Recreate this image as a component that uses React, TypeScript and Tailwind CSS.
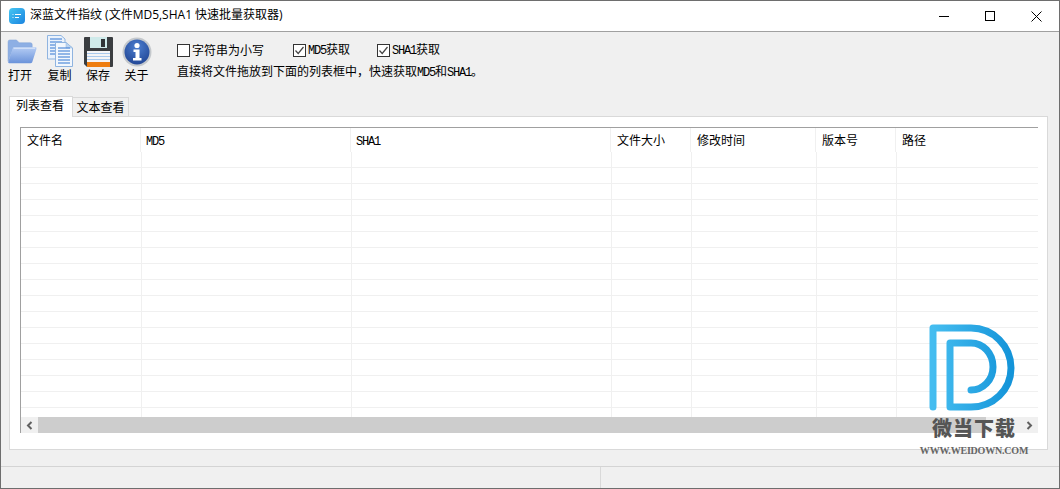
const latin = "font-['Liberation_Mono','Noto_Sans_CJK_SC',monospace]";
const latinText = `${latin} text-[12px] tracking-[-1.2px]`;

const columns = [
    { title: "文件名", width: "w-[120px]" },
    { title: "MD5", width: "w-[210px]" },
    { title: "SHA1", width: "w-[260px]" },
    { title: "文件大小", width: "w-[80px]" },
    { title: "修改时间", width: "w-[125px]" },
    { title: "版本号", width: "w-[80px]" },
    { title: "路径", width: "flex-1" },
];

function FolderIcon() {
    return (
        <svg width="30" height="26" viewBox="0 0 32 28" className="mb-[2px] ml-[3px]">
            <defs>
                <linearGradient id="folderFront" x1="0" y1="0" x2="0" y2="1">
                    <stop offset="0" stopColor="#b4ccf4" />
                    <stop offset="1" stopColor="#6b93da" />
                </linearGradient>
            </defs>
            <path d="M1 3 Q1 1 3 1 H10 L13 4 H25 Q27 4 27 6 V9 H7 L1 24 Z" fill="#8dafe4" stroke="#7d9fd6" strokeWidth="0.5" />
            <path d="M7 9 H31 Q32 9 31.5 11 L27 25 Q26.5 26 25 26 H2 Q0.8 26 1.2 24.5 L6 10 Q6.3 9 7 9 Z" fill="url(#folderFront)" />
            <path d="M7 10 H30" stroke="#dde8fa" strokeWidth="1" />
        </svg>
    );
}

function CopyIcon() {
    const back = [4, 7, 10, 13, 16, 19];
    const front = [13, 16, 19, 22, 25, 28];
    return (
        <svg width="26" height="32" viewBox="0 0 26 32">
            <path d="M0.5 0.5 H14 L18 4 V24 H0.5 Z" fill="#eaf2fc" stroke="#8fb4e0" />
            {back.map((y) => (
                <path key={y} d="M3 0 H15" transform={`translate(0 ${y})`} stroke="#4f8ad8" strokeWidth="1.2" />
            ))}
            <path d="M8.5 7.5 H19 L25.5 13 V31.5 H8.5 Z" fill="#f2f7fd" stroke="#8fb4e0" />
            <path d="M19 7.5 V13 H25.5 Z" fill="#bcd4f0" stroke="#8fb4e0" strokeWidth="0.5" />
            {front.map((y) => (
                <path key={y} d="M11 0 H23" transform={`translate(0 ${y})`} stroke="#4f8ad8" strokeWidth="1.2" />
            ))}
        </svg>
    );
}

function SaveIcon() {
    return (
        <svg width="29" height="30" viewBox="0 0 29 30">
            <path d="M1 0 H28 Q29 0 29 1 V29 Q29 30 28 30 H3 L0 27 V1 Q0 0 1 0 Z" fill="#3a3d40" />
            <rect x="6" y="0" width="17" height="11" fill="#cfeaea" />
            <rect x="17" y="2" width="4" height="8" fill="#2f3336" />
            <rect x="3" y="14" width="23" height="16" fill="#f4f4f6" />
            <rect x="3" y="16" width="23" height="1" fill="#a9c9ec" />
            <rect x="3" y="19" width="23" height="1" fill="#a9c9ec" />
            <rect x="3" y="22" width="23" height="1" fill="#a9c9ec" />
            <rect x="3" y="25" width="23" height="5" fill="#ee7d10" />
        </svg>
    );
}

function InfoIcon() {
    return (
        <svg width="30" height="30" viewBox="0 0 30 30">
            <defs>
                <radialGradient id="infoFill" cx="0.5" cy="0.3" r="0.8">
                    <stop offset="0" stopColor="#4d7fd0" />
                    <stop offset="1" stopColor="#1c3f8e" />
                </radialGradient>
            </defs>
            <circle cx="15" cy="15" r="14.5" fill="#c4c8cc" />
            <circle cx="15" cy="15" r="12.5" fill="url(#infoFill)" />
            <circle cx="15" cy="8.5" r="2.6" fill="#fff" />
            <path d="M11.5 12.5 H17.5 V21 H19.5 V23.5 H11 V21 H13.5 V15 H11.5 Z" fill="#fff" />
        </svg>
    );
}

function AppIcon() {
    return (
        <svg width="16" height="16" viewBox="0 0 16 16">
            <defs>
                <linearGradient id="appFill" x1="0" y1="0" x2="1" y2="1">
                    <stop offset="0" stopColor="#45c6f2" />
                    <stop offset="1" stopColor="#1b84e0" />
                </linearGradient>
            </defs>
            <rect width="16" height="16" rx="4" fill="url(#appFill)" />
            <path d="M6 6.5 H12 M6 9.5 H10" stroke="#fff" strokeWidth="1.2" />
            <path d="M3.5 6.5 H4.5 M3.5 9.5 H4.5" stroke="#d7f1fc" strokeWidth="1.2" />
        </svg>
    );
}

function Check({ checked }: { checked: boolean }) {
    return (
        <svg width="13" height="13" viewBox="0 0 13 13" className="shrink-0">
            <rect x="0.5" y="0.5" width="12" height="12" fill="#fff" stroke="#333" />
            {checked && <path d="M2.5 6.5 L5.2 9.5 L10.5 3" fill="none" stroke="#444" strokeWidth="1.2" />}
        </svg>
    );
}

function Tool({ icon, label, width }: { icon: React.ReactNode; label: string; width: string }) {
    return (
        <div className={`${width} flex flex-col items-center`}>
            <div className="h-[31px] flex items-end justify-center">{icon}</div>
            <span className="mt-[1px] text-[12px] leading-[14px] text-black">{label}</span>
        </div>
    );
}

function Logo() {
    return (
        <div className="absolute left-[921px] top-[322px] w-[104px] flex flex-col items-center pointer-events-none">
            <svg width="90" height="92" viewBox="2 0 90 92">
                <defs>
                    <linearGradient id="logoStroke" x1="0" y1="0" x2="1" y2="0">
                        <stop offset="0" stopColor="#45bdf0" />
                        <stop offset="1" stopColor="#1494d9" />
                    </linearGradient>
                </defs>
                <path
                    d="M6 85 V6 H44 C66 6 84 24 84 46 C84 68 66 85 44 85 H23 V21 H44 C56 21 66 31 66 45 C66 58 56 68 44 68"
                    fill="none"
                    stroke="url(#logoStroke)"
                    strokeWidth="7"
                    strokeLinecap="round"
                    strokeLinejoin="round"
                />
            </svg>
            <span className="text-[20px] leading-[24px] mt-[2px] tracking-[1px] font-black text-[#555] font-['Noto_Sans_CJK_SC',sans-serif]">微当下载</span>
            <span className="text-[10px] leading-[12px] mt-[5px] font-bold tracking-[-0.2px] text-[#666] whitespace-nowrap font-['Liberation_Serif',serif]">WWW.WEIDOWN.COM</span>
        </div>
    );
}

export default function App() {
    return (
        <div className="relative w-[1060px] h-[489px] overflow-hidden flex flex-col bg-[#f0f0f0] border-x border-b border-[#6e6e6e] font-['Noto_Sans_CJK_SC',sans-serif]">
            {/* Title bar */}
            <div className="h-[32px] shrink-0 bg-white border-t border-b border-t-[#6e6e6e] border-b-[#a0a0a0] flex items-center">
                <div className="ml-[8px] mr-[5px]">
                    <AppIcon />
                </div>
                <span className="text-[12px] leading-[14px] -mt-[2px] text-black font-['Open_Sans','Noto_Sans_CJK_SC',sans-serif]">深蓝文件指纹 (文件MD5,SHA1 快速批量获取器)</span>
                <div className="ml-auto flex items-center">
                    <div className="w-[46px] flex justify-center">
                        <div className="w-[10px] h-px bg-black" />
                    </div>
                    <div className="w-[46px] flex justify-center">
                        <div className="w-[10px] h-[10px] border border-black" />
                    </div>
                    <div className="w-[46px] flex justify-center">
                        <svg width="11" height="11" viewBox="0 0 11 11">
                            <path d="M0.5 0.5 L10.5 10.5 M10.5 0.5 L0.5 10.5" stroke="#000" strokeWidth="1" />
                        </svg>
                    </div>
                </div>
            </div>

            {/* Toolbar */}
            <div className="h-[63px] shrink-0 flex">
                <div className="-ml-[1px] mt-[4px] flex">
                    <Tool icon={<FolderIcon />} label="打开" width="w-[40px]" />
                    <Tool icon={<CopyIcon />} label="复制" width="w-[39px]" />
                    <Tool icon={<SaveIcon />} label="保存" width="w-[38px]" />
                    <Tool icon={<InfoIcon />} label="关于" width="w-[39px]" />
                </div>
                <div className="ml-[21px] mt-[10px] flex flex-col text-[12px] leading-[14px] text-black">
                    <div className="flex items-center">
                        <div className="w-[116px] flex items-center gap-[2px]">
                            <Check checked={false} />
                            <span>字符串为小写</span>
                        </div>
                        <div className="w-[84px] flex items-center gap-[2px]">
                            <Check checked />
                            <span><span className={latinText}>MD5</span>获取</span>
                        </div>
                        <div className="flex items-center gap-[2px]">
                            <Check checked />
                            <span><span className={latinText}>SHA1</span>获取</span>
                        </div>
                    </div>
                    <div className="mt-[6px]">
                        直接将文件拖放到下面的列表框中，快速获取<span className={latinText}>MD5</span>和<span className={latinText}>SHA1</span>。
                    </div>
                </div>
            </div>

            {/* Tabs */}
            <div className="h-[21px] shrink-0 ml-[8px] flex items-end text-[12px] leading-[14px] text-black">
                <div className="h-[21px] w-[64px] pb-[4px] pr-[2px] relative z-10 -mb-px bg-white border border-b-0 border-[#d9d9d9] flex items-center justify-center">列表查看</div>
                <div className="h-[19px] w-[56px] bg-[#f0f0f0] border border-l-0 border-b-0 border-[#d9d9d9] flex items-center justify-center">文本查看</div>
            </div>

            {/* Tab panel */}
            <div className="ml-[8px] mr-[11px] h-[334px] shrink-0 bg-white border border-[#d9d9d9] pt-[10px] pl-[10px] pr-[9px]">
                <div className="h-[306px] border-l border-t border-[#a0a0a0] flex flex-col overflow-hidden">
                    <div className="h-[24px] shrink-0 flex text-[12px] leading-[14px] text-black">
                        {columns.map((col) => (
                            <div key={col.title} className={`${col.width} shrink-0 border-r border-[#f0f0f0] last:border-r-0 pl-[5px] pt-[5px]`}>
                                {col.title === "MD5" || col.title === "SHA1" ? (
                                    <span className={latinText}>{col.title}</span>
                                ) : (
                                    <span className="ml-[1px]">{col.title}</span>
                                )}
                            </div>
                        ))}
                    </div>
                    {Array.from({ length: 17 }).map((_, i) => (
                        <div key={i} className={`shrink-0 flex pl-[1px] ${i < 16 ? "h-[16px] border-b border-[#f0f0f0]" : "h-[9px]"}`}>
                            {columns.map((col) => (
                                <div key={col.title} className={`${col.width} shrink-0 border-r border-[#f0f0f0] last:border-r-0`} />
                            ))}
                        </div>
                    ))}
                    <div className="h-[16px] shrink-0 flex bg-[#f0f0f0] items-center">
                        <div className="w-[17px] flex justify-center">
                            <svg width="7" height="9" viewBox="0 0 7 9">
                                <path d="M5.5 1 L2 4.5 L5.5 8" fill="none" stroke="#606060" strokeWidth="2" />
                            </svg>
                        </div>
                        <div className="h-[16px] w-[948px] bg-[#cdcdcd]" />
                        <div className="ml-auto w-[17px] flex justify-center">
                            <svg width="7" height="9" viewBox="0 0 7 9">
                                <path d="M1.5 1 L5 4.5 L1.5 8" fill="none" stroke="#606060" strokeWidth="2" />
                            </svg>
                        </div>
                    </div>
                </div>
            </div>

            {/* Status bar */}
            <div className="mt-[16px] flex-1 border-t border-[#d4d4d4] flex">
                <div className="w-[600px] border-r border-[#d9d9d9]" />
            </div>

            <Logo />
        </div>
    );
}
